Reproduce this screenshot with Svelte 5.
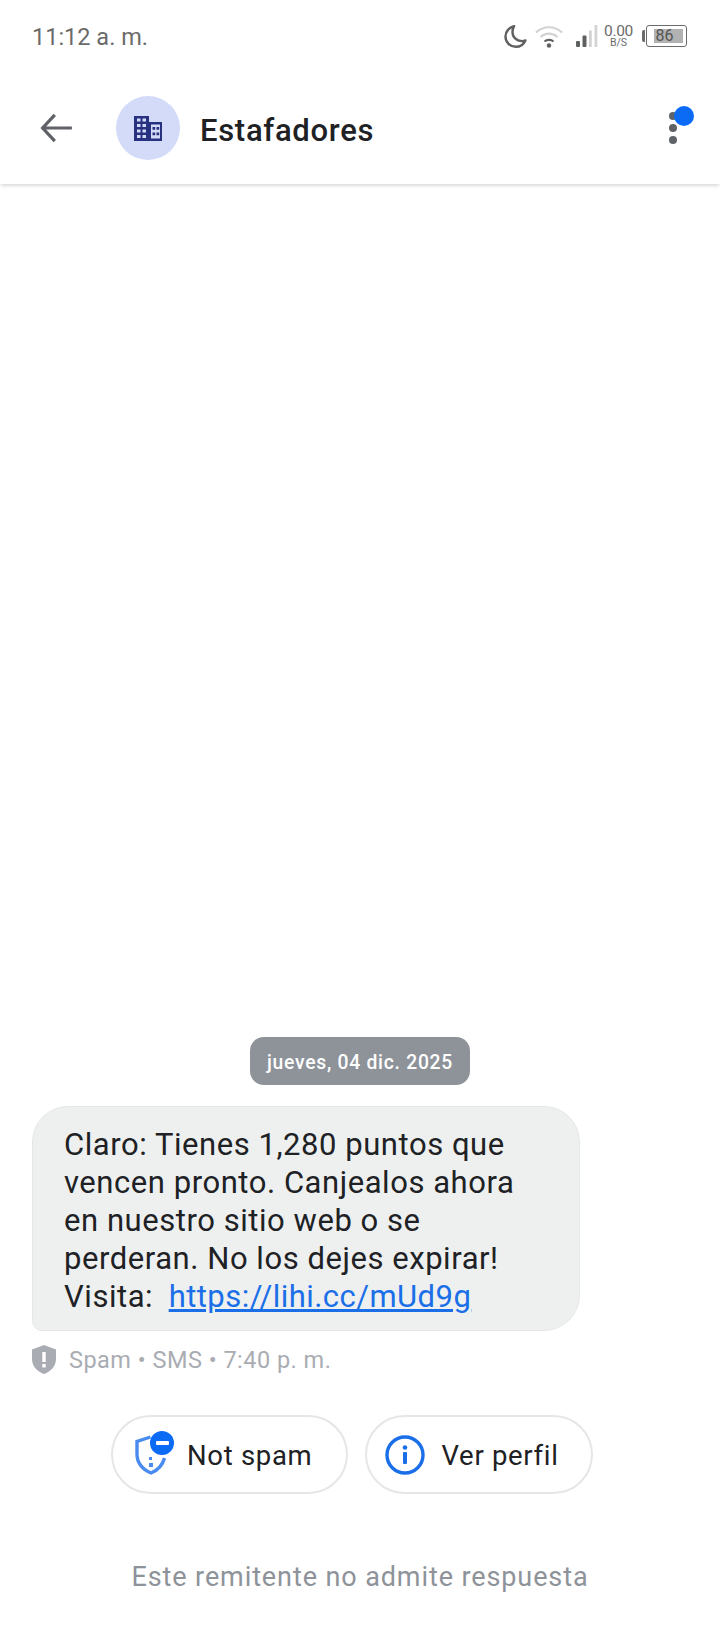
<script>
  const lines = [
    "Claro: Tienes 1,280 puntos que",
    "vencen pronto. Canjealos ahora",
    "en nuestro sitio web o se",
    "perderan. No los dejes expirar!"
  ];
</script>

<div class="page">
  <div class="status">
    <span class="clock">11:12 a. m.</span>
    <div class="status-icons">
      <svg class="moon" width="23" height="23" viewBox="1.500 1.500 20.500 21" fill="none">
        <path d="M10.500 2.500C6 3.600 2.600 7.400 2.600 12c0 5.200 4.200 9.400 9.400 9.400 3.900 0 7.200-2.200 8.800-5.800-1 .4-2 .6-3.200.6-5 0-8.600-3.600-8.600-8.400 0-1.900.5-3.700 1.500-5.300z" stroke="#5f6061" stroke-width="2.200" stroke-linejoin="round"/>
      </svg>
      <svg class="wifi" width="30" height="26" viewBox="0 0 30 26" fill="none">
        <path d="M2 9.500C9.500 2.500 20.500 2.500 28 9.500" stroke="#d3d3d3" stroke-width="2.200"/>
        <path d="M6.500 14C11.500 9.500 18.500 9.500 23.500 14" stroke="#d3d3d3" stroke-width="2.200"/>
        <path d="M10.500 18.500C13 16.200 17 16.200 19.500 18.500" stroke="#5f6061" stroke-width="2.200"/>
        <circle cx="15" cy="22.500" r="2.200" fill="#5f6061"/>
      </svg>
      <svg class="signal" width="22" height="22" viewBox="0 0 22 22">
        <rect x="0" y="16" width="4" height="6" rx="1" fill="#5f6061"/>
        <rect x="6.500" y="10.500" width="4" height="11.500" rx="1" fill="#5f6061"/>
        <rect x="13" y="5.500" width="2.800" height="16.500" fill="#d3d3d3"/>
        <rect x="18.500" y="0" width="2.800" height="22" fill="#d3d3d3"/>
      </svg>
      <div class="speed"><span class="num">0.00</span><span class="unit">B/S</span></div>
      <div class="battery">
        <i class="cap"></i>
        <div class="shell"><div class="level">86</div></div>
      </div>
    </div>
  </div>

  <header class="topbar">
    <svg class="back" width="36" height="36" viewBox="0 0 36 36" fill="none">
      <path d="M36 18H4M17 3.500 3.500 18 17 32.500" transform="translate(1.500 1.800) scale(.9)" stroke="#5f6368" stroke-width="3.600"/>
    </svg>
    <div class="avatar">
      <svg width="28" height="25" viewBox="0 0 28 25">
        <path fill="#27317f" fill-rule="evenodd" d="M0 0h15v25H0zM3 2.500v3h3.500v-3zm5.500 0v3H12v-3zM3 8v3h3.500V8zm5.500 0v3H12V8zM3 13.500v3h3.500v-3zm5.500 0v3H12v-3zM3 19v3h3.500v-3zm5.500 0v3H12v-3z"/>
        <path fill="#27317f" fill-rule="evenodd" d="M15 6h13v19H15zM17 8.500v14h9v-14zM18.500 11h2.700v2.700h-2.700zm4 0h2.700v2.700h-2.700zM18.500 16.500h2.700v2.700h-2.700zm4 0h2.700v2.700h-2.700z"/>
      </svg>
    </div>
    <h1>Estafadores</h1>
    <div class="menu">
      <i></i><i></i><i></i>
      <b></b>
    </div>
  </header>

  <main class="thread">
    <div class="date">jueves, 04 dic. 2025</div>
    <div class="bubble">
      {#each lines as line}
        <div>{line}</div>
      {/each}
      <div>Visita:&nbsp; <a href="#link">https://lihi.cc/mUd9g</a></div>
    </div>
    <div class="meta">
      <svg width="24" height="29" viewBox="0 0 24 29">
        <path fill="#a9acb2" fill-rule="evenodd" d="M12 0 24 4.500V14c0 7-5 12.500-12 15C5 26.500 0 21 0 14V4.500zM10.300 7v10h3.400V7zm0 12v3.500h3.400V19z"/>
      </svg>
      <span>Spam • SMS • 7:40 p. m.</span>
    </div>
    <div class="actions">
      <button class="chip first">
        <span class="shield">
          <svg width="32" height="44" viewBox="0 0 32 44" fill="none">
            <path d="M15.500 5 2 9.500V22c0 9 6 15.500 14 19 6-2.500 11.500-7.500 13.500-15" stroke="#4a8bf0" stroke-width="3.400"/>
            <rect x="14" y="25" width="3" height="3" fill="#4a8bf0"/>
            <rect x="14" y="31" width="4" height="4" fill="#4a8bf0"/>
          </svg>
          <b class="minus"><i></i></b>
        </span>
        <span class="label">Not spam</span>
      </button>
      <button class="chip second">
        <svg width="40" height="40" viewBox="0 0 40 40" fill="none">
          <circle cx="20" cy="20" r="18" stroke="#1a6fe8" stroke-width="3.400"/>
          <circle cx="20" cy="12.500" r="2.300" fill="#1a6fe8"/>
          <rect x="18" y="17" width="4" height="12" rx="1" fill="#1a6fe8"/>
        </svg>
        <span class="label">Ver perfil</span>
      </button>
    </div>
    <p class="notice">Este remitente no admite respuesta</p>
  </main>
</div>

<style>
  :global(body) {
    margin: 0;
    background: #fff;
  }

  .page {
    width: 720px;
    height: 1639px;
    display: flex;
    flex-direction: column;
    font-family: Roboto, "Liberation Sans", sans-serif;
    overflow: hidden;
  }

  .status {
    height: 72px;
    flex: none;
    display: flex;
    justify-content: space-between;
    align-items: center;
    padding: 0 33px 0 32px;
    box-sizing: border-box;
  }

  .clock {
    font-size: 23.500px;
    color: #6b6b6b;
    padding-top: 2px;
  }

  .status-icons {
    display: flex;
    align-items: center;
    height: 30px;
  }

  .wifi {
    margin-left: 7px;
  }

  .signal {
    margin-left: 12px;
  }

  .speed {
    display: flex;
    flex-direction: column;
    align-items: center;
    margin-left: 6px;
    color: #6b6b6b;
  }

  .num {
    font-size: 15.500px;
    letter-spacing: -0.3px;
    line-height: 13px;
  }

  .unit {
    font-size: 10.500px;
    line-height: 10px;
  }

  .battery {
    display: flex;
    align-items: center;
    margin-left: 9px;
  }

  .cap {
    width: 3px;
    height: 12px;
    background: #6b6b6b;
    border-radius: 2px 0 0 2px;
    margin-right: 1px;
  }

  .shell {
    width: 41px;
    height: 22px;
    box-sizing: border-box;
    border: 1.500px solid #6b6b6b;
    border-radius: 3px;
    display: flex;
    align-items: center;
    padding-left: 6.500px;
  }

  .level {
    width: 29px;
    height: 14px;
    flex: none;
    box-sizing: border-box;
    background: #b2b2b2;
    color: #555;
    font-size: 16px;
    line-height: 14px;
    padding-left: 2px;
  }

  .topbar {
    height: 112px;
    flex: none;
    display: flex;
    align-items: center;
    padding: 0 28px 0 38px;
    box-sizing: border-box;
    background: #fff;
    box-shadow: 0 3px 3px -1px rgba(0, 0, 0, 0.14);
    position: relative;
  }

  .back {
    flex: none;
  }

  .avatar {
    width: 64px;
    height: 64px;
    margin-left: 42px;
    border-radius: 50%;
    background: #d4dbf8;
    display: flex;
    align-items: center;
    justify-content: center;
    flex: none;
  }

  h1 {
    margin: 4px 0 0 20px;
    font-size: 31px;
    font-weight: 500;
    color: #202124;
    flex: 1;
    letter-spacing: 0.7px;
  }

  .menu {
    position: relative;
    display: flex;
    flex-direction: column;
    gap: 4px;
    margin-right: 15px;
  }

  .menu i {
    width: 8px;
    height: 8px;
    border-radius: 50%;
    background: #5f6368;
  }

  .menu b {
    position: absolute;
    top: -6px;
    left: 5px;
    width: 20px;
    height: 20px;
    border-radius: 50%;
    background: #0b6bf5;
  }

  .thread {
    flex: 1;
    display: flex;
    flex-direction: column;
    justify-content: flex-end;
    padding-bottom: 47px;
  }

  .date {
    align-self: center;
    height: 48px;
    line-height: 51px;
    padding: 0 17px;
    border-radius: 14px;
    background: #8e939a;
    color: #fff;
    font-size: 19.300px;
    font-weight: 500;
    letter-spacing: 0.75px;
  }

  .bubble {
    width: 548px;
    box-sizing: border-box;
    margin: 21px 0 0 32px;
    padding: 19px 20px 14px 31px;
    border: 1.500px solid #e5e7e7;
    border-radius: 36px 36px 36px 10px;
    background: #eef0f0;
    color: #202124;
    font-size: 31px;
    line-height: 37.900px;
    letter-spacing: 0.55px;
    white-space: nowrap;
  }

  .bubble a {
    color: #1a6fe8;
    text-decoration: underline;
    margin-left: -1px;
    letter-spacing: 0.45px;
  }

  .meta {
    display: flex;
    align-items: center;
    gap: 13px;
    margin: 13px 0 0 32px;
    color: #a9acb2;
    font-size: 23.500px;
    letter-spacing: 0.48px;
  }

  .meta span {
    padding-top: 2px;
  }

  .actions {
    display: flex;
    justify-content: center;
    gap: 17px;
    margin-top: 41px;
    padding-right: 16px;
  }

  .chip {
    height: 79px;
    box-sizing: border-box;
    display: flex;
    align-items: center;
    background: #fff;
    border: 2px solid #e6e6e6;
    border-radius: 40px;
    color: #202124;
    font-family: inherit;
    font-size: 27.500px;
    letter-spacing: 0.7px;
    padding: 0;
  }

  .label {
    padding-top: 2px;
  }

  .first {
    width: 237px;
    padding-left: 22px;
    gap: 6px;
  }

  .second {
    width: 228px;
    padding-left: 18px;
    gap: 16.500px;
  }

  .shield {
    position: relative;
    display: block;
    width: 46px;
    height: 47px;
  }

  .shield svg {
    position: absolute;
    left: 0;
    top: 1px;
  }

  .minus {
    position: absolute;
    left: 15px;
    top: 0;
    width: 24px;
    height: 24px;
    border-radius: 50%;
    background: #0b6bf5;
    display: flex;
    align-items: center;
    justify-content: center;
  }

  .minus i {
    width: 13px;
    height: 4px;
    background: #fff;
    border-radius: 1px;
  }

  .notice {
    margin: 68px 0 0;
    text-align: center;
    font-size: 27px;
    color: #8e939a;
    letter-spacing: 0.9px;
    line-height: 30px;
  }
</style>
